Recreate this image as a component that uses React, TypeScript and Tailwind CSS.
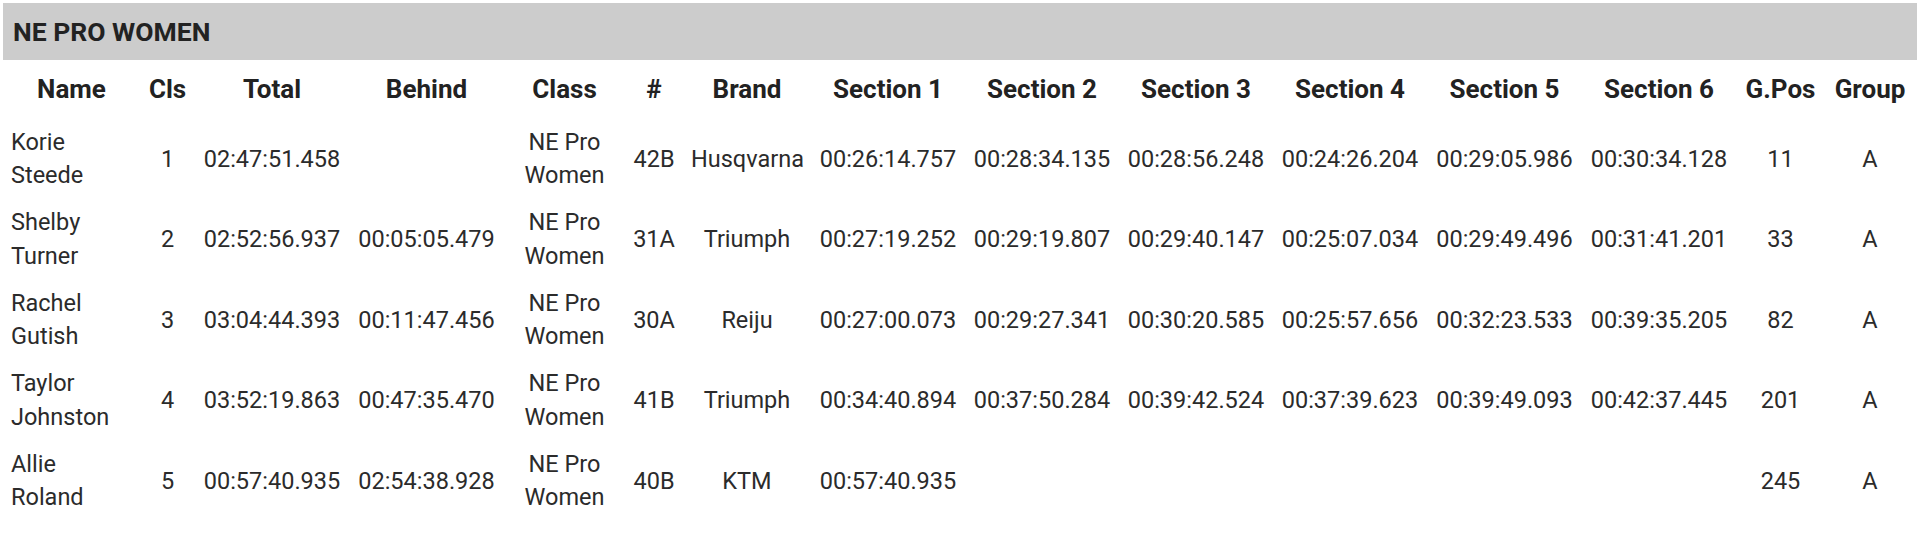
const sections = ["Section 1", "Section 2", "Section 3", "Section 4", "Section 5", "Section 6"];

const rows = [
  {
    name: ["Korie", "Steede"],
    cls: "1",
    total: "02:47:51.458",
    behind: "",
    num: "42B",
    brand: "Husqvarna",
    times: ["00:26:14.757", "00:28:34.135", "00:28:56.248", "00:24:26.204", "00:29:05.986", "00:30:34.128"],
    gpos: "11",
    group: "A",
  },
  {
    name: ["Shelby", "Turner"],
    cls: "2",
    total: "02:52:56.937",
    behind: "00:05:05.479",
    num: "31A",
    brand: "Triumph",
    times: ["00:27:19.252", "00:29:19.807", "00:29:40.147", "00:25:07.034", "00:29:49.496", "00:31:41.201"],
    gpos: "33",
    group: "A",
  },
  {
    name: ["Rachel", "Gutish"],
    cls: "3",
    total: "03:04:44.393",
    behind: "00:11:47.456",
    num: "30A",
    brand: "Reiju",
    times: ["00:27:00.073", "00:29:27.341", "00:30:20.585", "00:25:57.656", "00:32:23.533", "00:39:35.205"],
    gpos: "82",
    group: "A",
  },
  {
    name: ["Taylor", "Johnston"],
    cls: "4",
    total: "03:52:19.863",
    behind: "00:47:35.470",
    num: "41B",
    brand: "Triumph",
    times: ["00:34:40.894", "00:37:50.284", "00:39:42.524", "00:37:39.623", "00:39:49.093", "00:42:37.445"],
    gpos: "201",
    group: "A",
  },
  {
    name: ["Allie", "Roland"],
    cls: "5",
    total: "00:57:40.935",
    behind: "02:54:38.928",
    num: "40B",
    brand: "KTM",
    times: ["00:57:40.935", "", "", "", "", ""],
    gpos: "245",
    group: "A",
  },
];

function Time({ value }: { value: string }) {
  return <td className="px-2 text-center whitespace-nowrap">{value}</td>;
}

export default function App() {
  return (
    <div className="bg-white p-[3px] font-['Roboto',sans-serif] text-[#2b2b2b]">
      <div className="flex h-[57px] items-center bg-[#cccccc] pl-[10px]">
        <h2 className="text-[26.5px] font-bold text-[#222]">NE PRO WOMEN</h2>
      </div>
      <table className="w-[1912px] table-fixed border-collapse">
        <colgroup>
          <col className="w-[137px]" />
          <col className="w-[55px]" />
          <col className="w-[154px]" />
          <col className="w-[155px]" />
          <col className="w-[121px]" />
          <col className="w-[58px]" />
          <col className="w-[128px]" />
          <col className="w-[154px]" />
          <col className="w-[154px]" />
          <col className="w-[154px]" />
          <col className="w-[154px]" />
          <col className="w-[155px]" />
          <col className="w-[154px]" />
          <col className="w-[89px]" />
          <col className="w-[90px]" />
        </colgroup>
        <thead>
          <tr className="text-[26px] font-bold leading-[39px] text-[#222]">
            <th className="px-2 py-[10px] text-center">Name</th>
            <th className="px-2 py-[10px] text-center">Cls</th>
            <th className="px-2 py-[10px] text-center">Total</th>
            <th className="px-2 py-[10px] text-center">Behind</th>
            <th className="px-2 py-[10px] text-center">Class</th>
            <th className="px-2 py-[10px] text-center">#</th>
            <th className="px-2 py-[10px] text-center">Brand</th>
            {sections.map((s) => (
              <th key={s} className="px-2 py-[10px] text-center whitespace-nowrap">
                {s}
              </th>
            ))}
            <th className="px-2 py-[10px] text-center">G.Pos</th>
            <th className="px-2 py-[10px] text-center">Group</th>
          </tr>
        </thead>
        <tbody>
          {rows.map((r) => (
            <tr key={r.cls} className="text-[23.5px] leading-[33.5px]">
              <td className="px-2 py-[6.75px] text-left">
                {r.name[0]}
                <br />
                {r.name[1]}
              </td>
              <td className="px-2 text-center">{r.cls}</td>
              <Time value={r.total} />
              <Time value={r.behind} />
              <td className="px-2 text-center">
                NE Pro
                <br />
                Women
              </td>
              <td className="px-2 text-center">{r.num}</td>
              <td className="px-2 text-center">{r.brand}</td>
              {r.times.map((t, i) => (
                <Time key={i} value={t} />
              ))}
              <td className="px-2 text-center">{r.gpos}</td>
              <td className="px-2 text-center">{r.group}</td>
            </tr>
          ))}
        </tbody>
      </table>
    </div>
  );
}
